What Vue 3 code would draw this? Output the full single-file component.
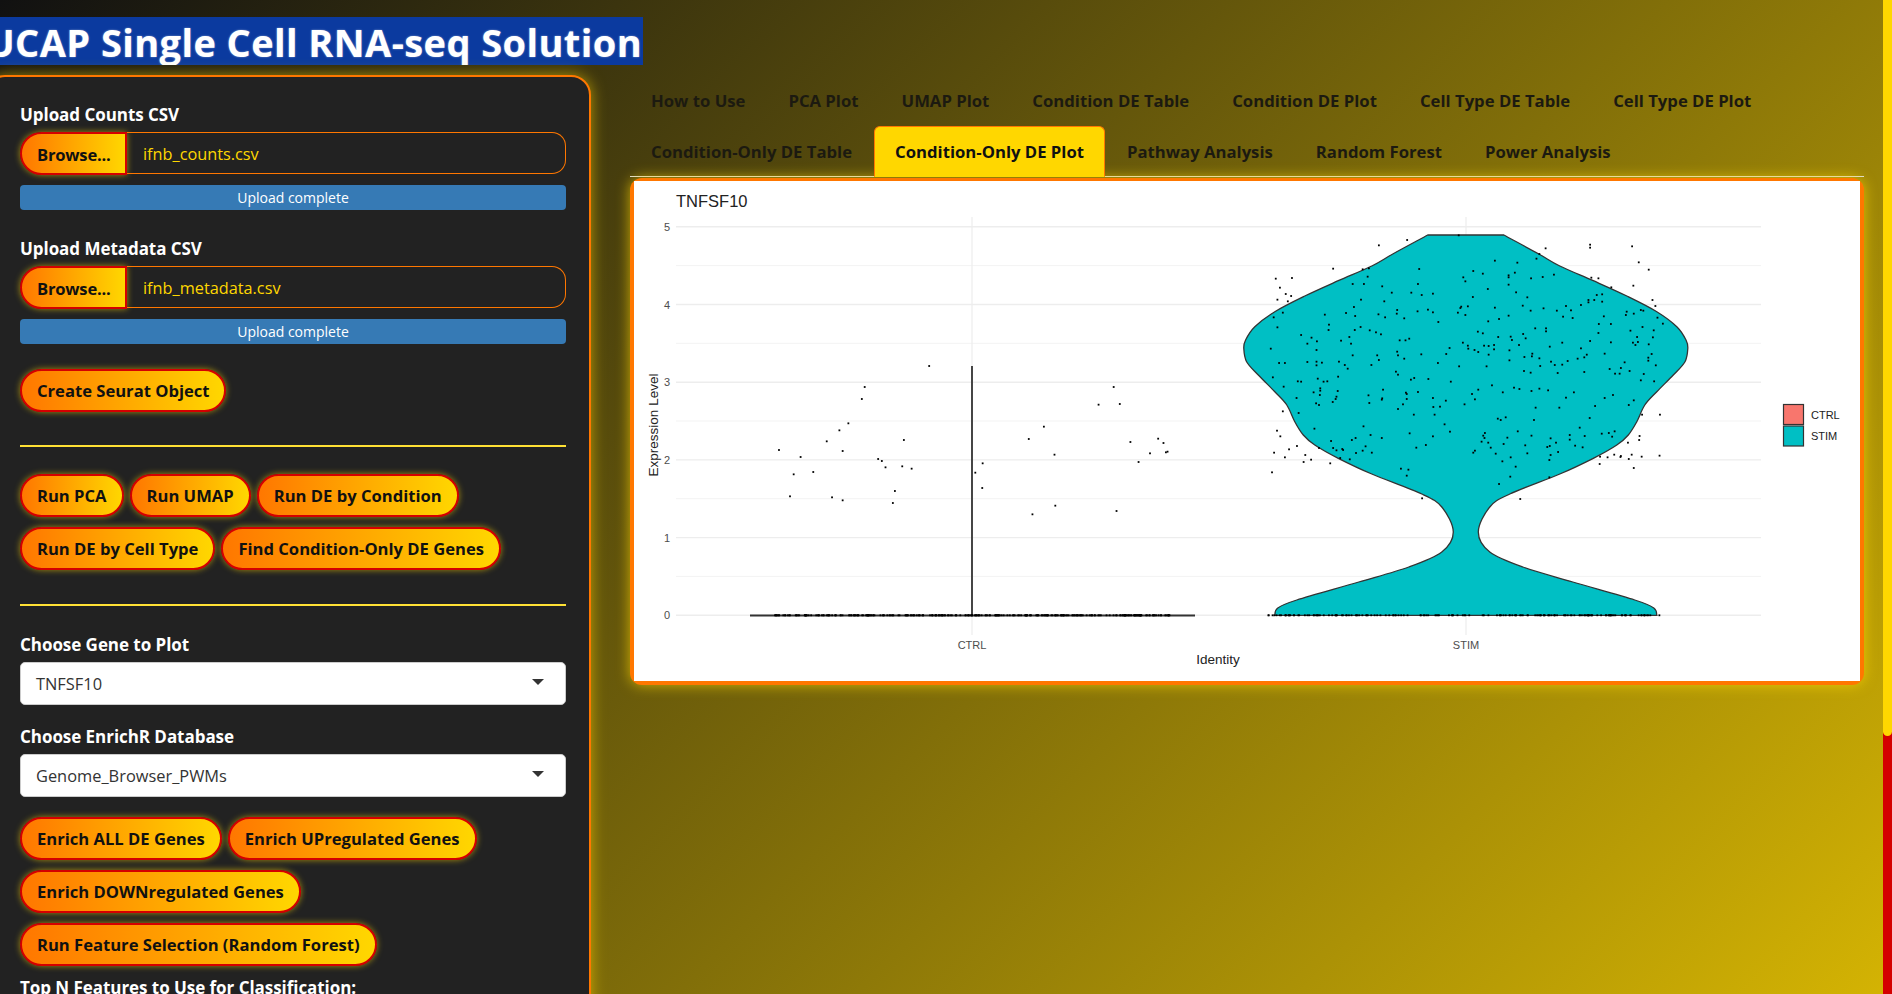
<template>
  <div class="page">
    <div class="content">
      <h1 class="title"><span>UCAP Single Cell RNA-seq Solution</span></h1>
      <div class="layout">
        <aside class="sidebar">
          <label class="lbl first">Upload Counts CSV</label>
          <div class="file-row">
            <span class="btn browse">Browse...</span>
            <span class="file-name">ifnb_counts.csv</span>
          </div>
          <div class="progress">Upload complete</div>

          <label class="lbl second">Upload Metadata CSV</label>
          <div class="file-row">
            <span class="btn browse">Browse...</span>
            <span class="file-name">ifnb_metadata.csv</span>
          </div>
          <div class="progress">Upload complete</div>

          <div class="btn-row create"><button class="btn">Create Seurat Object</button></div>
          <hr class="rule rule-a" />
          <div class="btn-row"><button v-for="b in runButtons" :key="b" class="btn">{{ b }}</button></div>
          <hr class="rule rule-b" />

          <label class="lbl gene">Choose Gene to Plot</label>
          <div class="select">TNFSF10<i class="caret"></i></div>
          <label class="lbl enrich">Choose EnrichR Database</label>
          <div class="select second-select">Genome_Browser_PWMs<i class="caret"></i></div>

          <div class="btn-row enrich-btns"><button v-for="b in enrichButtons" :key="b" class="btn">{{ b }}</button></div>
          <label class="lbl top-n">Top N Features to Use for Classification:</label>
        </aside>

        <main class="main">
          <nav class="tabs">
            <a v-for="t in tabs" :key="t" class="tab" :class="{ active: t === activeTab }">{{ t }}</a>
          </nav>
          <div class="plot-box">
            <svg class="plot" viewBox="0 0 1226 500" width="1226" height="500">
              <rect width="1226" height="500" fill="#fff" />
              <!-- grid -->
              <line v-for="y in minorY" :key="'m' + y" x1="42" x2="1127" :y1="y" :y2="y" stroke="#f3f3f3" stroke-width="1" />
              <line v-for="y in majorY" :key="'g' + y" x1="42" x2="1127" :y1="y" :y2="y" stroke="#ededed" stroke-width="1.4" />
              <line v-for="x in [338, 832]" :key="'v' + x" :x1="x" :x2="x" y1="36" y2="454" stroke="#ededed" stroke-width="1.2" />

              <!-- CTRL violin is collapsed to a cross -->
              <path d="M116 434.5H561M338 434.5V185" fill="none" stroke="#333" stroke-width="1.8" />
              <!-- STIM violin -->
              <path :d="stimPath" fill="#00bfc4" stroke="#333" stroke-width="1.3" />

              <rect v-for="(d, i) in dots" :key="i" :x="d[0] - 0.9" :y="d[1] - 0.9" width="1.8" height="1.8" fill="#000" />

              <!-- axes text -->
              <text x="42" y="26" class="plot-title">TNFSF10</text>
              <text v-for="(y, i) in majorY" :key="'t' + y" x="36" :y="y + 4" class="tick" text-anchor="end">{{ 5 - i }}</text>
              <text x="338" y="468" class="tick" text-anchor="middle">CTRL</text>
              <text x="832" y="468" class="tick" text-anchor="middle">STIM</text>
              <text x="584" y="483" class="axis" text-anchor="middle">Identity</text>
              <text x="0" y="0" class="axis" text-anchor="middle" transform="translate(24 244) rotate(-90)">Expression Level</text>

              <!-- legend -->
              <rect x="1149.5" y="223.5" width="20" height="20" fill="#f8766d" stroke="#333" stroke-width="1.2" />
              <rect x="1149.5" y="245" width="20" height="20" fill="#00bfc4" stroke="#333" stroke-width="1.2" />
              <text x="1177" y="238" class="tick legend">CTRL</text>
              <text x="1177" y="259" class="tick legend">STIM</text>
            </svg>
          </div>
        </main>
      </div>
    </div>
    <div class="scrollbar"><div class="thumb"></div></div>
  </div>
</template>

<script setup>
const runButtons = ['Run PCA', 'Run UMAP', 'Run DE by Condition', 'Run DE by Cell Type', 'Find Condition-Only DE Genes']
const enrichButtons = ['Enrich ALL DE Genes', 'Enrich UPregulated Genes', 'Enrich DOWNregulated Genes', 'Run Feature Selection (Random Forest)']
const tabs = [
  'How to Use', 'PCA Plot', 'UMAP Plot', 'Condition DE Table', 'Condition DE Plot', 'Cell Type DE Table', 'Cell Type DE Plot',
  'Condition-Only DE Table', 'Condition-Only DE Plot', 'Pathway Analysis', 'Random Forest', 'Power Analysis'
]
const activeTab = 'Condition-Only DE Plot'

const majorY = [45.8, 123.5, 201.2, 278.9, 356.6, 434.3]
const minorY = [84.6, 162.3, 240, 317.7, 395.4]

// half profile of the STIM violin, measured from its centre line
const profile = [
  [38, 54], [73, 73], [94, 85], [127.5, 99.7], [161, 115], [191, 130.7], [211, 145.7], [220.2, 159], [222, 167.3],
  [219.2, 180.7], [207.5, 194], [191, 210.7], [179, 224], [171, 240.7], [162.5, 254], [151, 264], [127.5, 277.3],
  [94, 293], [44, 313], [24, 326], [12.5, 351], [24, 371], [57, 386], [107, 401], [169, 419], [188, 427], [191, 434.3]
]
const cx = 831.8

function smooth(pts) {
  let d = `M${pts[0][0]} ${pts[0][1]}`
  for (let i = 0; i < pts.length - 1; i++) {
    const p0 = pts[i - 1] || pts[i]
    const p1 = pts[i]
    const p2 = pts[i + 1]
    const p3 = pts[i + 2] || p2
    const c1 = [p1[0] + (p2[0] - p0[0]) / 6, p1[1] + (p2[1] - p0[1]) / 6]
    const c2 = [p2[0] - (p3[0] - p1[0]) / 6, p2[1] - (p3[1] - p1[1]) / 6]
    d += `C${c1[0].toFixed(1)} ${c1[1].toFixed(1)} ${c2[0].toFixed(1)} ${c2[1].toFixed(1)} ${p2[0].toFixed(1)} ${p2[1].toFixed(1)}`
  }
  return d
}

const right = profile.map(p => [cx + p[0], p[1]])
const left = profile.map(p => [cx - p[0], p[1]])
const stimPath = smooth(right) + 'L' + (cx - 191) + ' 434.3' + smooth(left.slice().reverse()).replace(/^M/, 'L') + 'Z'

// dots read off the reference, in crop coordinates
const top = '334,496;402,480;526,466;735,505;720,522;713,536;842,494;842,503;943,499;959,547;983,569;946,617;992,660;999,678;86,596;125,594;96,623;110,642;123,648;90,659;115,664;224,566;295,568;310,565;307,590;271,612;298,612;342,619;431,567;428,612;365,638;412,638;437,645;464,641;561,573;613,542;667,548;661,578;646,586;646,592;584,581;537,592;542,604;646,614;700,595;728,591;755,584;845,593;862,595;893,622;596,627;664,637;691,652;560,651;347,664;291,659;274,681;532,680;548,679;530,684;613,683;680,677;699,692;730,685;762,692;784,678;796,691;820,675;838,660;838,667;852,660;858,645;871,643;871,665;378,690;377,701;427,694;452,689;464,697;524,698;542,705;255,699;204,704;277,708;333,703;349,712;395,715;477,726;597,724;623,717;646,707;777,710;800,714;875,709;930,695;928,705;947,701;964,690;970,692;1004,713;1017,731;81,712;103,698;90,742;214,734;213,750;290,741;276,750;312,751;327,757;339,763;147,765;172,773;185,784;162,791;243,782;263,771;267,791;384,781;398,781;407,776;572,755;584,760;621,771;651,770;654,780;681,762;687,775;710,745;736,745;736,754;863,732;892,732;862,759;892,787;842,783;939,752;968,741;995,751;993,772;955,771;945,788;957,786;951,795;983,793;74,806;184,810;271,826;330,826;334,840;378,815;380,826;395,836;436,823;504,804;496,822;536,788;548,797;549,806;564,810;573,816;587,797;598,798;611,795;611,808;598,824;648,811;648,841;671,795;745,800;775,788;820,805;812,836;828,832;834,824;877,821;703,821;702,829;684,831;720,835;748,845;788,843;757,855;775,854;925,847;990,822;982,833;982,842;1000,856;94,849;108,849;162,846;184,845;184,856;197,848;238,845;252,855;259,866;316,855;476,849;527,859;593,859;722,858;889,867;916,864'
const bottom = '79,22;187,26;236,20;375,5;380,14;419,24;411,29;453,27;507,35;683,3;699,8;764,9;828,6;902,11;913,11;937,3;971,12;964,31;996,34;139,34;147,35;201,35;210,34;105,50;193,55;193,62;177,67;235,63;192,75;232,80;230,87;136,84;223,96;183,100;190,105;309,76;344,59;342,85;341,89;399,68;401,72;428,66;401,87;311,99;392,103;380,117;464,84;495,92;481,110;465,111;540,103;558,72;573,59;565,88;606,46;632,67;659,53;672,57;701,63;720,56;741,61;803,67;784,83;877,84;897,75;947,91;935,105;854,108;768,113;711,113;103,124;141,129;418,134;468,134;620,146;627,150;639,142;707,150;841,144;967,134;1010,134;89,182;97,199;179,176;297,169;314,195;341,204;269,210;278,204;219,213;408,190;464,199;492,163;505,185;668,184;643,203;701,197;589,189;585,197;588,204;581,215;597,218;634,222;603,233;817,173;793,195;793,209;829,198;870,191;887,189;901,184;895,200;747,205;760,218;745,228;739,231;806,227;824,232;765,246;686,226;961,198;960,210;933,218;137,228;118,238;82,248;108,262;157,255;171,269;153,276;217,280;224,234;232,241;246,237;248,240;190,234;302,229;295,242;279,249;317,248;264,268;241,264;424,233;447,225;565,242;561,248;615,251;651,262;631,274;691,250;744,270;747,255;663,290;866,260;884,262;900,254;916,258;915,261;935,267;942,254;966,260;1009,257;865,282;947,294;77,307;387,296;405,299;401,317;650,320;744,322;623,342;438,385;674,387'
const ctrl = '365,390;418,411;401,463;449,456;392,529;482,364;513,331;535,310;521,393;495,532;521,541;568,237;575,201;608,417;617,423;626,442;671,360;667,439;690,446;649,513;644,549;733,138;846,458;864,430;863,504;977,357;1014,320;1040,404;986,583;1042,557;1148,254;1185,201;1200,252;1226,366;1246,426;1274,400;1294,356;1307,369;1313,397;1317,395;1192,573'

const parse = s => s.split(';').map(p => p.split(',').map(Number))
const dots = [
  ...parse(top).map(([x, y]) => [x / 2.405 + 1240 - 634, y / 3 + 80 - 181]),
  ...parse(bottom).map(([x, y]) => [x / 2.405 + 1240 - 634, y / 3 + 370 - 181]),
  ...parse(ctrl).map(([x, y]) => [x / 2.45 + 630 - 634, y / 3 + 320 - 181])
]

// rug of zero values along the baseline
let seed = 7
const rnd = () => (seed = (seed * 16807) % 2147483647) / 2147483647
for (let i = 0; i < 300; i++) dots.push([141 + rnd() * 396, 434.3])
for (let i = 0; i < 170; i++) dots.push([634 + rnd() * 394, 434.3])
</script>

<style scoped>
.page {
  display: flex;
  height: 994px;
  overflow: hidden;
}
.content {
  flex: 1;
  min-width: 0;
  padding-top: 17px;
}
.title {
  margin: 0;
  height: 48px;
  display: flex;
}
.title span {
  display: block;
  width: 643px;
  height: 48px;
  overflow: hidden;
  background: #0b3a9f;
  color: #fff;
  font: 700 38px/50px "Open Sans", sans-serif;
  letter-spacing: 0.4px;
  white-space: nowrap;
  text-indent: -14px;
  text-shadow: 0 0 2px rgba(255, 255, 255, 0.5);
}
.layout {
  display: flex;
  margin-top: 10px;
}
.sidebar {
  box-sizing: border-box;
  flex: none;
  width: 606px;
  height: 1100px;
  margin-left: -15px;
  padding: 0 23px 0 33px;
  border: 2px solid #ff7700;
  border-radius: 20px;
  background: #222;
  box-shadow: 0 0 15px rgba(255, 215, 0, 0.6);
  color: #fff;
  font-family: "Open Sans", sans-serif;
}
.lbl {
  display: block;
  font-size: 17px;
  line-height: 22px;
  font-weight: 700;
  letter-spacing: -0.05px;
  color: #fff;
  white-space: nowrap;
}
.lbl.first { margin-top: 27px; }
.lbl.second { margin-top: 28px; }
.file-row {
  display: flex;
  height: 43px;
  margin-top: 6px;
}
.btn {
  box-sizing: border-box;
  height: 43px;
  padding: 0 15px;
  border: 2px solid #d40000;
  border-radius: 22px;
  background: linear-gradient(90deg, #ff7700, #ffd700);
  box-shadow: 0 0 6px rgba(255, 215, 0, 0.6);
  color: #111;
  font: 700 16.6px/40px "Open Sans", sans-serif;
  white-space: nowrap;
}
.browse {
  flex: none;
  width: 107px;
  border-radius: 22px 0 0 22px;
  line-height: 41px;
  letter-spacing: -0.2px;
}
.file-name {
  flex: 1;
  box-sizing: border-box;
  height: 42px;
  padding-left: 16px;
  border: 1px solid #ff7700;
  border-left: 0;
  border-radius: 0 14px 14px 0;
  color: #ffd700;
  font-size: 16.3px;
  line-height: 43px;
}
.progress {
  height: 25px;
  margin-top: 10px;
  border-radius: 4px;
  background: #367ab5;
  color: #fff;
  font-size: 14px;
  line-height: 25px;
  text-align: center;
}
.btn-row {
  display: flex;
  flex-wrap: wrap;
  gap: 10px 6px;
}
.create { margin-top: 25px; }
.rule {
  height: 2px;
  margin: 0;
  border: 0;
  background: #ffe135;
}
.rule-a { margin: 33px 0 27px; }
.rule-b { margin: 34px 0 0; }
.lbl.gene { margin-top: 28px; }
.select {
  position: relative;
  box-sizing: border-box;
  height: 43px;
  margin-top: 6px;
  padding-left: 15px;
  border: 1px solid #ccc;
  border-radius: 5px;
  background: #fff;
  color: #333;
  font-size: 16.4px;
  line-height: 42px;
}
.second-select { margin-top: 6px; }
.lbl.enrich { margin-top: 21px; }
.caret {
  position: absolute;
  right: 21px;
  top: 16px;
  border: 6px solid transparent;
  border-top-color: #333;
  border-bottom: 0;
}
.enrich-btns { margin-top: 20px; }
.lbl.top-n { margin-top: 11px; }
.main {
  flex: 1;
  min-width: 0;
  padding-left: 39px;
}
.tabs {
  display: flex;
  flex-wrap: wrap;
  align-content: flex-start;
  box-sizing: border-box;
  width: 1234px;
  height: 102px;
  border-bottom: 1px solid #ddd;
  font-family: "Open Sans", sans-serif;
}
.tab {
  box-sizing: border-box;
  height: 51px;
  padding: 0 20px;
  margin-right: 1px;
  border: 1px solid transparent;
  border-radius: 6px 6px 0 0;
  color: #1c1a10;
  font-size: 16.7px;
  font-weight: 700;
  line-height: 50px;
  white-space: nowrap;
}
.tab.active {
  background: #ffd700;
  border-color: #ff7700;
  border-bottom-color: #ffd700;
  color: #111;
}
.plot-box {
  box-sizing: border-box;
  width: 1234px;
  height: 507px;
  margin-top: 1px;
  padding: 3px 4px 4px;
  border-radius: 12px;
  background: #ff7700;
  box-shadow: 0 0 14px rgba(255, 215, 0, 0.7);
}
.plot {
  display: block;
}
.plot-title {
  font: 16.5px "Liberation Sans", sans-serif;
  fill: #222;
}
.tick {
  font: 11px "Liberation Sans", sans-serif;
  fill: #4d4d4d;
}
.legend {
  fill: #222;
}
.axis {
  font: 13.5px "Liberation Sans", sans-serif;
  fill: #222;
}
.scrollbar {
  flex: none;
  width: 9px;
  height: 994px;
  background: #d40000;
}
.thumb {
  height: 736px;
  border-radius: 0 0 5px 5px;
  background: #ffd700;
}
</style>

<style>
body {
  min-height: 994px;
  overflow: hidden;
  background: linear-gradient(135deg, #111, #ffd700) 0 0 / 1892px 1628px no-repeat #ffd700;
}
</style>
